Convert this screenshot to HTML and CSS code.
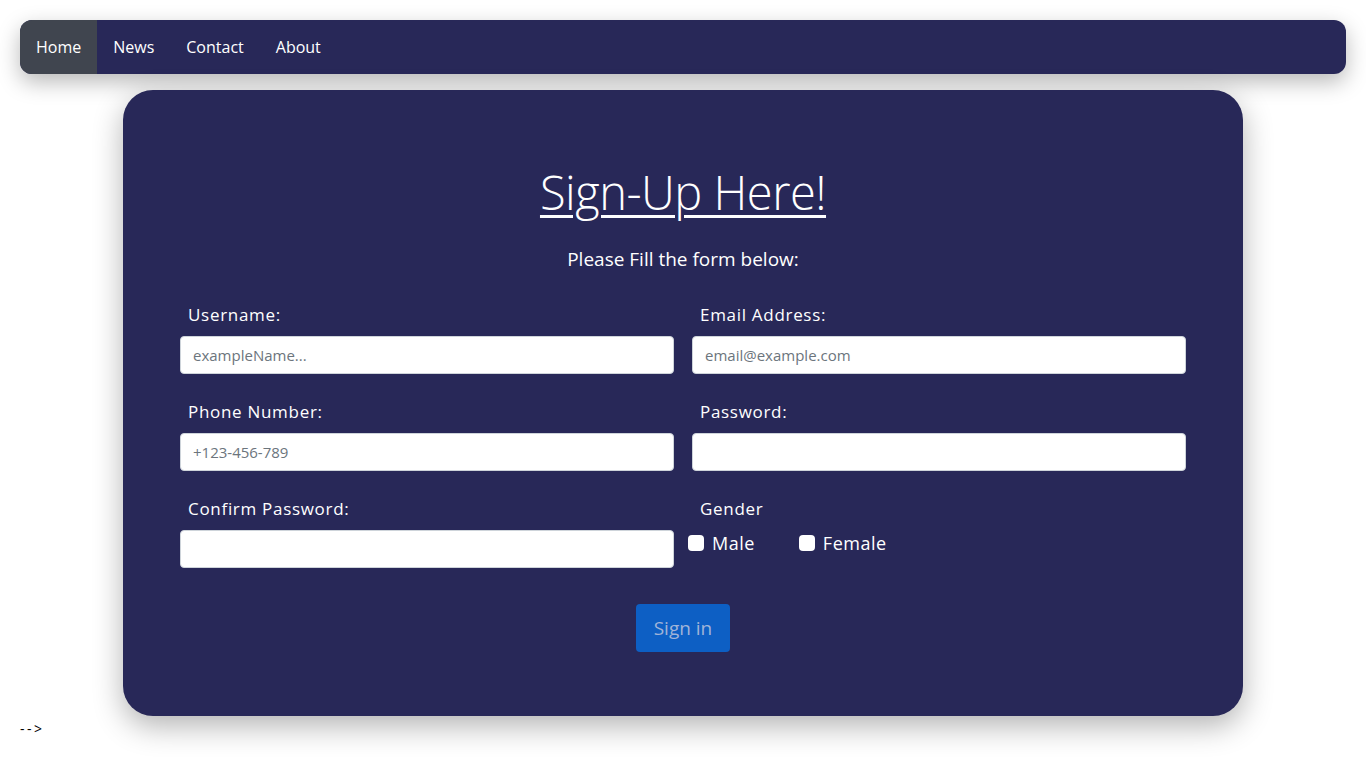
FILE: index.html
```html
<!DOCTYPE html>
<html lang="en">
<head>
<meta charset="utf-8">
<title>Sign Up</title>
<link rel="stylesheet" href="styles.css">
</head>
<body>
<nav class="navbar">
  <a class="nav-link active" href="#">Home</a>
  <a class="nav-link" href="#">News</a>
  <a class="nav-link" href="#">Contact</a>
  <a class="nav-link" href="#">About</a>
</nav>
<main class="card">
  <h1 class="title">Sign-Up Here!</h1>
  <p class="subtitle">Please Fill the form below:</p>
  <form class="form">
    <div class="field">
      <label class="label">Username:</label>
      <input class="input" type="text" placeholder="exampleName...">
    </div>
    <div class="field">
      <label class="label">Email Address:</label>
      <input class="input" type="email" placeholder="email@example.com">
    </div>
    <div class="field">
      <label class="label">Phone Number:</label>
      <input class="input" type="text" placeholder="+123-456-789">
    </div>
    <div class="field">
      <label class="label">Password:</label>
      <input class="input" type="password">
    </div>
    <div class="field">
      <label class="label">Confirm Password:</label>
      <input class="input" type="password">
    </div>
    <div class="field">
      <label class="label">Gender</label>
      <div class="checks">
        <label class="check"><input class="box" type="checkbox"><span>Male</span></label>
        <label class="check"><input class="box" type="checkbox"><span>Female</span></label>
      </div>
    </div>
    <div class="actions">
      <button class="btn" type="button">Sign in</button>
    </div>
  </form>
</main>
<div class="stray">--&gt;</div>
</body>
</html>
```
FILE: styles.css
```css
* { box-sizing: border-box; }
html { background: #fff; }
body {
  margin: 0;
  padding: 20px 20px 0;
  min-height: 100vh;
  font-family: "Open Sans", "Noto Sans", sans-serif;
}
.navbar {
  display: flex;
  height: 54px;
  background: #282858;
  border-radius: 12px;
  box-shadow: 0 8px 22px rgba(0,0,0,0.28);
}
.nav-link {
  display: flex;
  align-items: center;
  padding: 0 16px;
  color: #fff;
  text-decoration: none;
  font-size: 16px;
}
.nav-link.active {
  background: #40454f;
  border-radius: 12px 0 0 12px;
}
.card {
  width: 1120px;
  margin: 16px auto 0;
  height: 626px;
  background: #282858;
  border-radius: 30px;
  box-shadow: 0 10px 30px rgba(0,0,0,0.3);
  padding: 62px 57px 0;
  color: #fff;
}
.title {
  margin: 0;
  text-align: center;
  font-weight: 300;
  font-size: 47px;
  line-height: 80px;
  text-decoration: underline;
  text-decoration-thickness: 3px;
  text-underline-offset: 5px;
  letter-spacing: -0.5px;
}
.subtitle {
  margin: 14px 0 0;
  text-align: center;
  font-size: 19px;
  line-height: 26px;
}
.form {
  margin-top: 30px;
  display: grid;
  grid-template-columns: 494px 494px;
  column-gap: 18px;
  row-gap: 25px;
}
.field { display: flex; flex-direction: column; }
.label {
  padding-left: 8px;
  font-size: 17px;
  line-height: 26px;
  letter-spacing: 0.7px;
  margin-bottom: 8px;
}
.input {
  height: 38px;
  border: 1px solid #ced4da;
  border-radius: 4px;
  padding: 0 12px;
  font-family: inherit;
  font-size: 15px;
  color: #333;
  background: #fff;
}
.input::placeholder { color: #6c757d; }
.checks { display: flex; gap: 44px; margin-left: -4px; margin-top: 3px; }
.check {
  display: flex;
  align-items: center;
  gap: 8px;
  font-size: 18px;
  letter-spacing: 0.5px;
  line-height: 20px;
}
.box {
  appearance: none;
  -webkit-appearance: none;
  width: 16px;
  height: 16px;
  margin: 0;
  background: #fff;
  border-radius: 4px;
}
.actions {
  grid-column: 1 / span 2;
  display: flex;
  justify-content: center;
  margin-top: 11px;
}
.btn {
  width: 94px;
  height: 48px;
  border: 0;
  border-radius: 4px;
  background: #0d5fc4;
  color: #a0b4d8;
  font-family: inherit;
  font-size: 19px;
}
.stray {
  margin-top: 4px;
  font-size: 14px;
  line-height: 18px;
  letter-spacing: 2.5px;
  color: #000;
}
```
